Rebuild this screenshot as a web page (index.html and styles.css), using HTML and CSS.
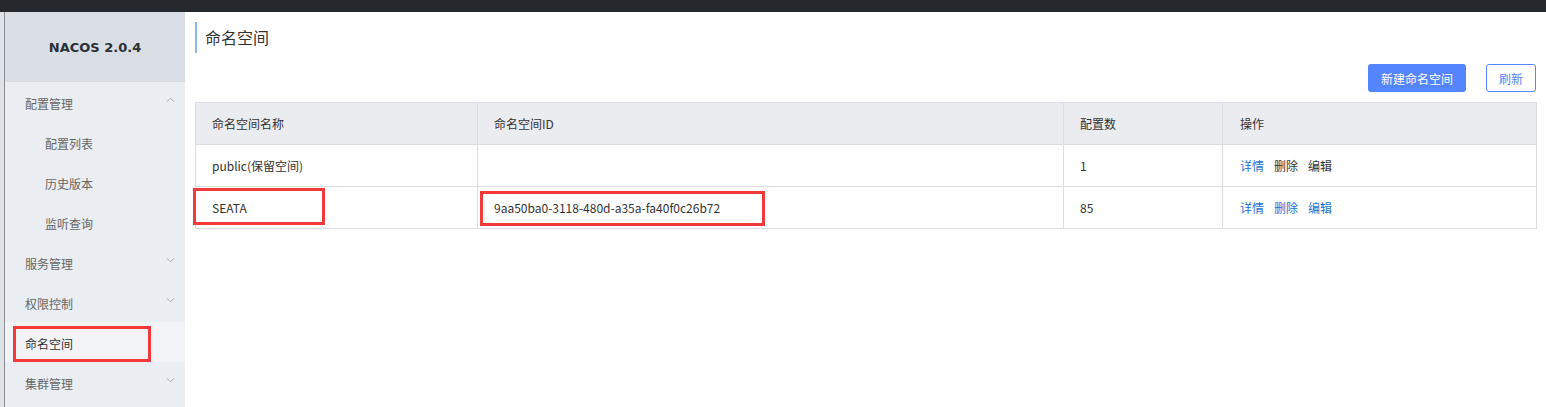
FILE: index.html
```html
<!DOCTYPE html>
<html lang="zh">
<head>
<meta charset="utf-8">
<title>Nacos</title>
<link rel="stylesheet" href="styles.css">
</head>
<body>
<div class="topbar"></div>
<div class="layout">
  <aside class="sidebar">
    <div class="brand">NACOS 2.0.4</div>
    <ul class="menu">
      <li class="item"><span>配置管理</span><svg class="chev" viewBox="0 0 10 6"><path d="M1 5 L5 1 L9 5" /></svg></li>
      <li class="item sub"><span>配置列表</span></li>
      <li class="item sub"><span>历史版本</span></li>
      <li class="item sub"><span>监听查询</span></li>
      <li class="item"><span>服务管理</span><svg class="chev" viewBox="0 0 10 6"><path d="M1 1 L5 5 L9 1" /></svg></li>
      <li class="item"><span>权限控制</span><svg class="chev" viewBox="0 0 10 6"><path d="M1 1 L5 5 L9 1" /></svg></li>
      <li class="item active"><span>命名空间</span><i class="mark mark-side"></i></li>
      <li class="item"><span>集群管理</span><svg class="chev" viewBox="0 0 10 6"><path d="M1 1 L5 5 L9 1" /></svg></li>
    </ul>
  </aside>
  <main class="main">
    <h1 class="title">命名空间</h1>
    <div class="actions">
      <button class="btn primary">新建命名空间</button>
      <button class="btn outline">刷新</button>
    </div>
    <table class="grid">
      <colgroup>
        <col class="c1"><col class="c2"><col class="c3"><col class="c4">
      </colgroup>
      <thead>
        <tr><th>命名空间名称</th><th>命名空间ID</th><th>配置数</th><th>操作</th></tr>
      </thead>
      <tbody>
        <tr>
          <td>public(保留空间)</td>
          <td></td>
          <td>1</td>
          <td class="ops"><a class="link">详情</a><a class="plain">删除</a><a class="plain">编辑</a></td>
        </tr>
        <tr>
          <td class="rel">SEATA<i class="mark mark-name"></i></td>
          <td class="rel">9aa50ba0-3118-480d-a35a-fa40f0c26b72<i class="mark mark-id"></i></td>
          <td>85</td>
          <td class="ops"><a class="link">详情</a><a class="link">删除</a><a class="link">编辑</a></td>
        </tr>
      </tbody>
    </table>
  </main>
</div>
</body>
</html>
```

FILE: styles.css
```css
* { box-sizing: border-box; }
html, body { margin: 0; padding: 0; }
body {
  width: 1546px;
  height: 407px;
  overflow: hidden;
  background: #fff;
  font-family: "Noto Sans CJK SC", "Noto Sans", sans-serif;
  font-size: 12px;
  color: #333;
}
.topbar {
  height: 12px;
  background: #25292e;
}
.layout {
  display: flex;
  height: 395px;
  border-left: 4px solid #dfe3e8;
}
.sidebar {
  width: 181px;
  flex: none;
  background: #eaedf1;
  border-left: 1px solid #8a8d91;
}
.brand {
  height: 70px;
  background: #d9dee4;
  display: flex;
  align-items: center;
  justify-content: center;
  font-family: "DejaVu Sans", "Noto Sans", sans-serif;
  font-weight: bold;
  font-size: 13px;
  color: #2b2f36;
}
.menu {
  list-style: none;
  margin: 0;
  padding: 0;
}
.item {
  position: relative;
  height: 40px;
  display: flex;
  align-items: center;
  justify-content: space-between;
  padding: 2px 10px 0 20px;
  color: #666;
  font-size: 12px;
}
.item.sub { padding-left: 40px; }
.item.active {
  background: #f2f3f7;
  color: #333;
}
.chev {
  width: 9px;
  height: 6px;
  fill: none;
  stroke: #a0a6b0;
  stroke-width: 1;
  margin-top: -6px;
}
.main {
  flex: 1;
  padding: 10px 9px 0 10px;
}
.title {
  margin: 0;
  height: 31px;
  border-left: 2px solid #88b7e0;
  padding-left: 8px;
  font-size: 16px;
  font-weight: normal;
  line-height: 31px;
  color: #333;
}
.actions {
  display: flex;
  justify-content: flex-end;
  gap: 20px;
  margin-top: 11px;
  margin-right: 1px;
  height: 28px;
}
.btn {
  height: 28px;
  border-radius: 3px;
  font-family: "Noto Sans CJK SC", sans-serif;
  font-size: 12px;
  padding: 0 12px;
  cursor: pointer;
}
.btn.primary {
  width: 98px;
  background: #5584ff;
  color: #fff;
  border: none;
}
.btn.outline {
  width: 50px;
  background: #fff;
  color: #5584ff;
  border: 1px solid #5584ff;
  padding: 0;
}
.grid {
  margin-top: 10px;
  width: 1341px;
  border-collapse: collapse;
  table-layout: fixed;
  border: 1px solid #dcdee3;
}
.c1 { width: 282px; }
.c2 { width: 586px; }
.c3 { width: 159px; }
.c4 { width: 314px; }
.grid th, .grid td {
  height: 42px;
  border: 1px solid #dcdee3;
  padding: 0 16px;
  text-align: left;
  font-weight: normal;
  font-size: 12px;
  color: #333;
}
.grid th { background: #ebecf0; }
.grid td:nth-child(4), .grid th:nth-child(4) { padding-left: 17px; }
.ops a { margin-right: 10px; }
.link { color: #1d73d3; }
.plain { color: #333; }
.rel { position: relative; }
.mark {
  position: absolute;
  border: 3px solid #f23a3a;
  pointer-events: none;
}
.mark-side { left: 8px; top: 4px; width: 138px; height: 36px; }
.mark-name { left: -3px; top: 1px; width: 132px; height: 37px; }
.mark-id { left: 2px; top: 4px; width: 285px; height: 35px; }
```
